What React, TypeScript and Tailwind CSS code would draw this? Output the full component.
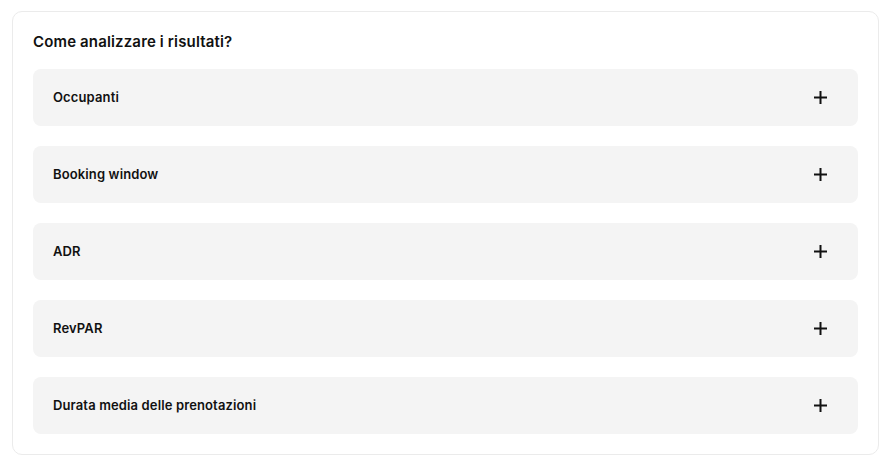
import React from "react";

const items = [
  "Occupanti",
  "Booking window",
  "ADR",
  "RevPAR",
  "Durata media delle prenotazioni",
];

const Plus = () => (
  <svg width="13" height="13" viewBox="0 0 13 13" fill="none" stroke="#111" strokeWidth="2">
    <path d="M6.5 0v13M0 6.5h13" />
  </svg>
);

export default function App() {
  return (
    <div className="bg-white w-[891px] h-[467px] pt-[11px] pl-[12px] font-['Inter',sans-serif] text-[#111]">
      <div className="w-[867px] border border-[#ebebeb] rounded-[10px] px-5 pt-[21px] pb-[20px]">
        <h2 className="text-[15px] font-semibold leading-[18px] mb-[18px] tracking-[0.01em]">Come analizzare i risultati?</h2>
        <div className="flex flex-col gap-5">
          {items.map((it) => (
            <div key={it} className="h-[57px] bg-[#f4f4f4] rounded-lg flex items-center justify-between pl-5 pr-[31px]">
              <span className="text-[13px] font-semibold tracking-[0.01em]">{it}</span>
              <Plus />
            </div>
          ))}
        </div>
      </div>
    </div>
  );
}
